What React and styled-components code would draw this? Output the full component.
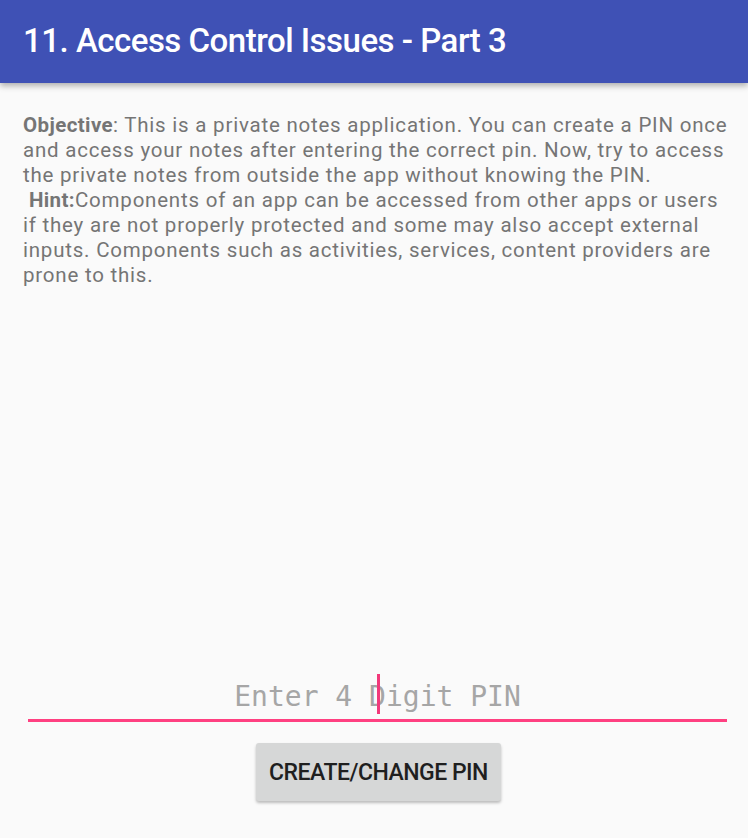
import React from 'react';
import styled, { createGlobalStyle } from 'styled-components';

const Global = createGlobalStyle`
  html, body {
    margin: 0;
    padding: 0;
    background: #fafafa;
  }
  #root {
    height: 838px;
  }
`;

const Screen = styled.div`
  width: 748px;
  height: 838px;
  display: flex;
  flex-direction: column;
  background: #fafafa;
  font-family: Roboto, "Liberation Sans", sans-serif;
  overflow: hidden;
`;

const AppBar = styled.header`
  height: 83px;
  flex-shrink: 0;
  background: #3f51b5;
  display: flex;
  align-items: center;
  padding: 0 23px 3px;
  box-sizing: border-box;
  box-shadow: 0 3px 6px rgba(0, 0, 0, 0.3);
  position: relative;
  z-index: 1;
`;

const Title = styled.h1`
  margin: 0;
  color: #fff;
  font-weight: 500;
  font-size: 33px;
  letter-spacing: -0.5px;
  white-space: nowrap;
`;

const Content = styled.main`
  flex: 1;
  display: flex;
  flex-direction: column;
  padding: 30px 0 0 23px;
`;

const Description = styled.p`
  margin: 0;
  color: #757575;
  font-size: 20.5px;
  line-height: 25px;
  letter-spacing: 0.78px;
  white-space: nowrap;
`;

const Strong = styled.b`
  font-weight: 700;
  letter-spacing: 0.4px;
`;

const Spacer = styled.div`
  flex: 1;
`;

const Form = styled.div`
  display: flex;
  flex-direction: column;
  align-items: center;
  padding: 0 21px 37px 0;
`;

const Field = styled.div`
  position: relative;
  align-self: stretch;
  margin: 0 0 0 5px;
  height: 46px;
  border-bottom: 3px solid #ff4081;
  display: flex;
  justify-content: center;
  align-items: center;
`;

const Placeholder = styled.span`
  font-family: "DejaVu Sans Mono", "Liberation Mono", monospace;
  font-size: 28px;
  color: #a6a6a6;
  position: relative;
`;

const Caret = styled.span`
  position: absolute;
  left: 349px;
  top: 1px;
  width: 3px;
  height: 40px;
  background: #f2397a;
`;

const Button = styled.button`
  margin: 21px 0 0 7px;
  width: 245px;
  height: 58px;
  border: none;
  border-radius: 3px;
  background: #d6d7d7;
  box-shadow: 0 2px 3px rgba(0, 0, 0, 0.25);
  font-family: Roboto, "Liberation Sans", sans-serif;
  font-weight: 500;
  font-size: 23px;
  letter-spacing: -0.5px;
  color: #1f1f1f;
  padding: 0;
`;

export default function App() {
  return (
    <Screen>
      <Global />
      <AppBar>
        <Title>11. Access Control Issues - Part 3</Title>
      </AppBar>
      <Content>
        <Description>
          <Strong>Objective</Strong>: This is a private notes application. You can create a PIN once
          <br />
          and access your notes after entering the correct pin. Now, try to access
          <br />
          the private notes from outside the app without knowing the PIN.
          <br />
          &nbsp;<Strong>Hint:</Strong>Components of an app can be accessed from other apps or users
          <br />
          if they are not properly protected and some may also accept external
          <br />
          inputs. Components such as activities, services, content providers are
          <br />
          prone to this.
        </Description>
        <Spacer />
        <Form>
          <Field>
            <Placeholder>Enter 4 Digit PIN</Placeholder>
            <Caret />
          </Field>
          <Button>CREATE/CHANGE PIN</Button>
        </Form>
      </Content>
    </Screen>
  );
}
